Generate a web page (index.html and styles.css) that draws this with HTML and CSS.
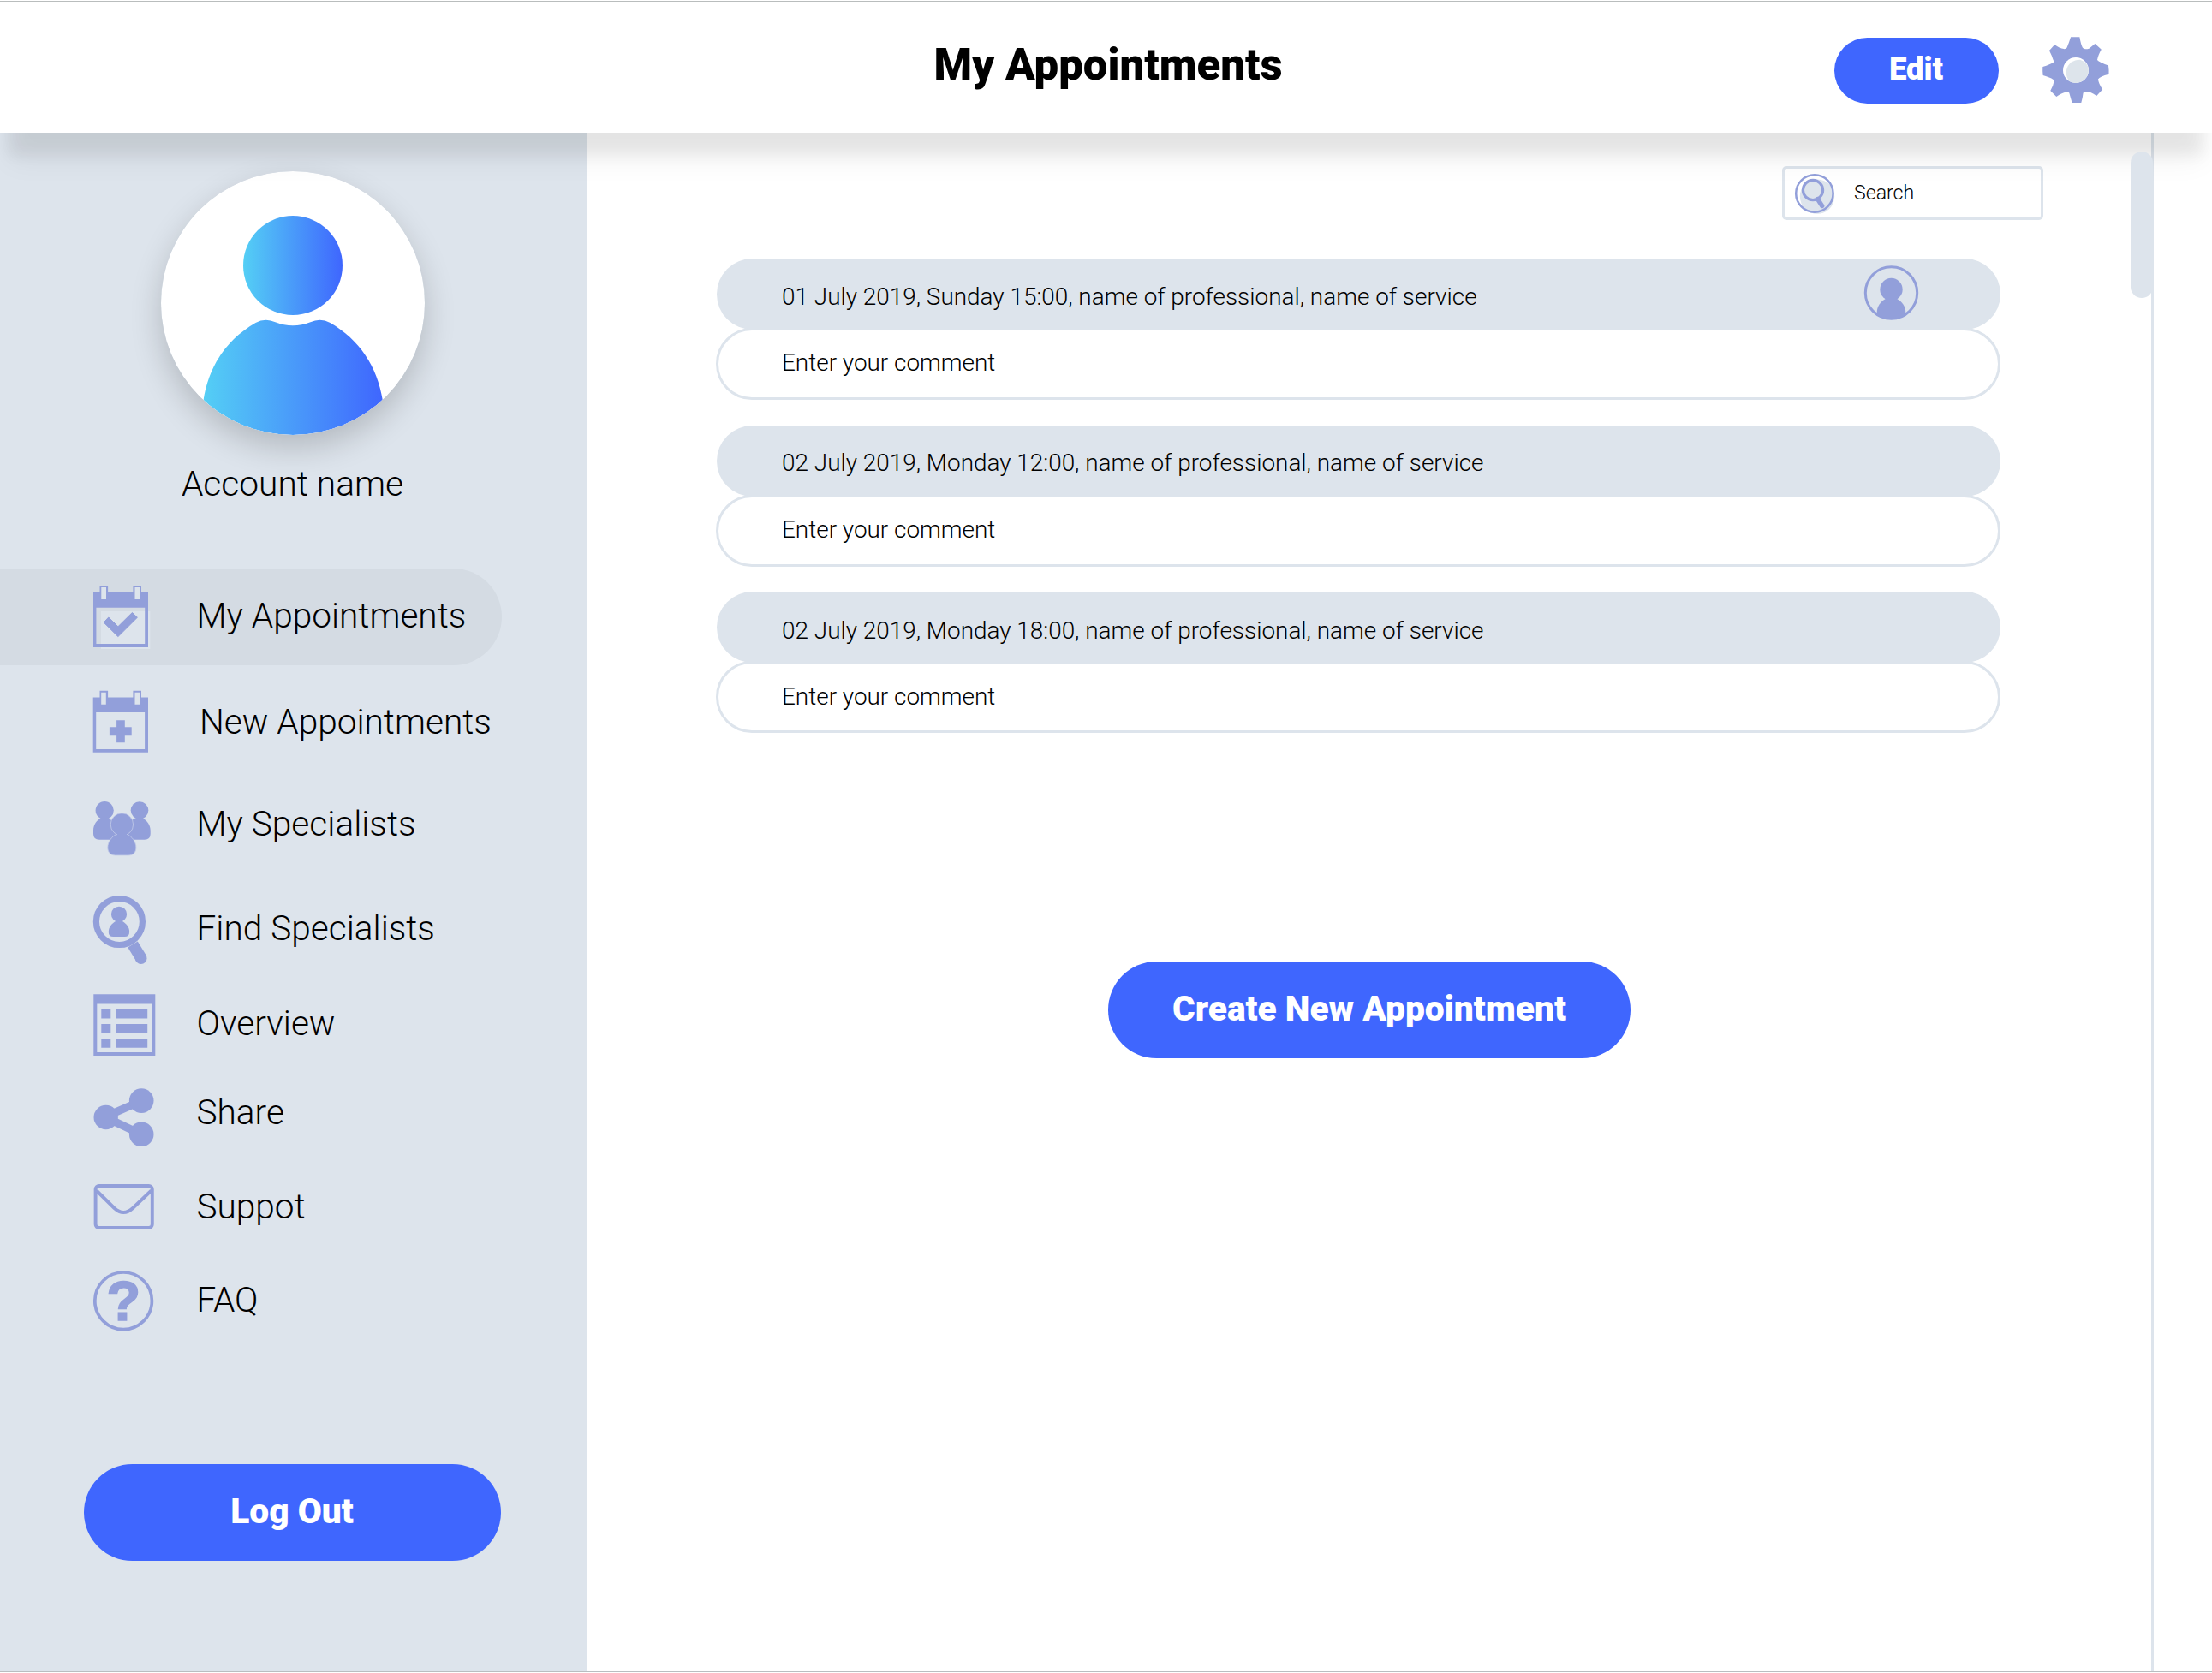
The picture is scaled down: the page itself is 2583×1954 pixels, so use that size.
FILE: index.html
```html
<!DOCTYPE html>
<html lang="en">
<head>
<meta charset="utf-8">
<title>My Appointments</title>
<link rel="stylesheet" href="styles.css">
</head>
<body>
<div class="app">
  <header class="topbar">
    <h1 class="topbar-title">My Appointments</h1>
    <div class="topbar-actions">
      <button class="btn btn-edit">Edit</button>
      <svg class="gear" viewBox="2384 42 80 80">
        <path fill="#929fda" d="M2418 43.3h10.4q1.5 9 3.6 12.4 2 2.5 7.4 1l7-5.7 7.4 6.7q-4 7-4.8 12.4 2.5 3 13 6.3.8 5 .5 10.3-10.500 2.500-12.500 5.700.5 5 5.200 12.000l-7 7.600q-8-5.500-11.600-5-3.200.3-4 1.400-.5 5-2.300 11.700h-10.700q-2-7-3.300-11.700-2-2-4.700-.6-4 1-10.300 5.300l-7-7q3.500-6 4.300-11.700-.2-1.500-1.300-1.700-3-2-11.700-4.600-.6-5-.3-10 9-3 12.600-5.400.8-1.500-.3-2.600-1.500-5-4.600-11l6.300-7q5.500 4.500 10.700 5 2.500.3 3.600-1.700 2-4.500 4.400-12z"/>
        <circle cx="2424" cy="82" r="15" fill="#fff"/>
        <path fill="#dde4eb" d="M2438.900 82a15 15 0 0 1-22 13.200c-8-8-4.500-25.500 12-25.500q10 3 10 12.300z"/>
      </svg>
    </div>
  </header>

  <div class="body">
    <aside class="sidebar">
      <svg class="avatar" viewBox="187.500 199.300 308 308">
        <defs>
          <linearGradient id="tone"><stop offset="0" stop-color="#54cff5"/><stop offset="1" stop-color="#3f66fe"/></linearGradient>
          <clipPath id="disc"><circle cx="341.500" cy="353.300" r="154"/></clipPath>
        </defs>
        <circle cx="341.500" cy="353.300" r="154" fill="#fff"/>
        <circle cx="341.500" cy="309.300" r="58" fill="url(#tone)"/>
        <path clip-path="url(#disc)" fill="url(#tone)" d="M237 467C243 427 264 396 298 376.400Q309 370 321 375.500Q341.500 383.700 362 375.500Q374 370 385 376.400C419 396 440 427 446.400 467V510H237Z"/>
      </svg>
      <p class="account">Account name</p>

      <nav class="menu">
        <a class="item item-mine">
          <svg class="icon" viewBox="105 664 80 113" height="113">
            <path fill="#dde4ec" d="M118 714h57.400v44H118z"/>
            <path fill="#929fda" fill-rule="evenodd" d="M109 692h64v64h-64zM112.400 709.700v42.300h56.800v-42.300z"/>
            <path fill="#929fda" d="M116.500 684h9.600v16.300h-9.600zM155.400 684h9.600v16.300h-9.600z"/>
            <path fill="#dde4ec" d="M118.300 686h5.700v14h-5.700zM157.500 686h5.700v14h-5.700z"/>
            <path fill="#929fda" stroke="#929fda" stroke-linejoin="round" d="M121.200 727l5.600-6 11.100 10.800 16.500-16.300 6 5.700-22.500 22.400z"/>
          </svg>
          <span class="label">My Appointments</span>
        </a>
        <a class="item item-new">
          <svg class="icon" viewBox="105 777 80 131" height="131">
            <path fill="#929fda" fill-rule="evenodd" d="M108.700 814.500h64.300v64.300h-64.300zM112.200 832v43h56.900v-43z"/>
            <path fill="#929fda" d="M116.500 806.700h9.600v16.300h-9.600zM155.400 806.700h9.600v16.300h-9.600z"/>
            <path fill="#dde4ec" d="M118.200 808.700h5.600v14h-5.600zM157.500 808.700h5.600v14h-5.600z"/>
            <path fill="#929fda" d="M136.100 841.300h9.700v7.900h7.900v10h-7.900v8h-9.700v-8h-8.200v-10h8.200z"/>
          </svg>
          <span class="label">New Appointments</span>
        </a>
        <a class="item item-specialists">
          <svg class="icon" viewBox="105 908 80 108" height="108">
            <g fill="#929fda">
              <circle cx="122.200" cy="946.500" r="10.600"/>
              <circle cx="163" cy="946.500" r="10.300"/>
              <path d="M109 970c0-7 4-12 9-14.500h8.500c5 2.500 9 8 9 14.500v4q0 6.700-7 6.700H116q-7 0-7-6.700zM149 970c0-7 4-12 9-14.500h8.500c5 2.500 9.200 8 9.200 14.500v4q0 6.700-7 6.700H156q-7 0-7-6.700z"/>
            </g>
            <g fill="#929fda" stroke="#c3cbe8" stroke-width=".8">
              <path d="M125.800 990c0-7 5-13 10-15.500h13c5 2.500 10.100 8.500 10.100 15.500 0 6-4 9-9 9h-15.100c-5 0-9-3-9-9z"/>
              <circle cx="142.400" cy="963" r="13.200"/>
            </g>
            <path fill="#929fda" d="M137 971h11v7h-11z"/>
          </svg>
          <span class="label">My Specialists</span>
        </a>
        <a class="item item-find">
          <svg class="icon" viewBox="105 1016 80 136" height="136">
            <circle cx="139.400" cy="1076.500" r="27" fill="none" stroke="#929fda" stroke-width="7.200"/>
            <path d="M155 1103l9.800 16" stroke="#929fda" stroke-width="13.500" fill="none"/>
            <circle cx="164.700" cy="1119.200" r="6.800" fill="#929fda"/>
            <g fill="#929fda">
              <circle cx="139" cy="1067.800" r="9.100"/>
              <path d="M126.800 1088.500c0-6 4-10 8.200-12.500h8c4.200 2.500 8.100 6.500 8.100 12.500q0 5.500-5.500 5.500h-13.300q-5.500 0-5.500-5.500z"/>
            </g>
          </svg>
          <span class="label">Find Specialists</span>
        </a>
        <a class="item item-overview">
          <svg class="icon" viewBox="105 1152 80 86" height="86">
            <path fill="#929fda" fill-rule="evenodd" d="M109.300 1161.200h72v71.700h-72zM113.300 1172.500v56.500h64v-56.500z"/>
            <path fill="#929fda" d="M118.300 1178.800h11v10.700h-11zM118.300 1196h11v10.800h-11zM118.300 1212.900h11v10.800h-11zM135.200 1178.800h37v10.700h-37zM135.200 1196h37v10.800h-37zM135.200 1212.900h37v10.800h-37z"/>
          </svg>
          <span class="label">Overview</span>
        </a>
        <a class="item item-share">
          <svg class="icon" viewBox="105 1238 80 122" height="122">
            <path d="M165.300 1285.700l-41.600 18.300M165.300 1325l-41.600-19.700" stroke="#929fda" stroke-width="9.300" fill="none"/>
            <g fill="#929fda"><circle cx="123.700" cy="1305" r="14.200"/><circle cx="165.200" cy="1285.600" r="14.300"/><circle cx="165.200" cy="1324.800" r="14.300"/></g>
          </svg>
          <span class="label">Share</span>
        </a>
        <a class="item item-support">
          <svg class="icon" viewBox="105 1360 80 97" height="97">
            <g fill="none" stroke="#929fda" stroke-width="3.900">
              <rect x="111.600" y="1385" width="66.200" height="49" rx="4"/>
              <path d="M112.700 1390.500l20.800 20.500q5.500 5 10.800 5t10.800-5l21.600-20.500"/>
            </g>
          </svg>
          <span class="label">Suppot</span>
        </a>
        <a class="item item-faq">
          <svg class="icon" viewBox="105 1457 80 122" height="122">
            <circle cx="144.100" cy="1519.300" r="33.300" fill="none" stroke="#929fda" stroke-width="3.700"/>
            <text class="icon-mark" x="144.300" y="1542.300" text-anchor="middle">?</text>
          </svg>
          <span class="label">FAQ</span>
        </a>
      </nav>

      <button class="btn btn-logout">Log Out</button>
    </aside>

    <main class="content">
      <div class="search">
        <svg class="search-icon" viewBox="2095 200 48 50">
          <circle cx="2122" cy="228.600" r="20.200" fill="#dde4ec"/>
          <circle cx="2118.900" cy="225" r="21.700" fill="none" stroke="#929fda" stroke-width="2.500"/>
          <circle cx="2117" cy="221" r="11.600" fill="#dde4ec" stroke="#929fda" stroke-width="3.200"/>
          <path d="M2122.500 231.500l5.200 8" stroke="#929fda" stroke-width="5.300" stroke-linecap="round"/>
        </svg>
        <span class="search-text">Search</span>
      </div>

      <section class="list">
        <article class="entry">
          <div class="entry-head">
            <span class="entry-text">01 July 2019, Sunday 15:00, name of professional, name of service</span>
            <svg class="person" viewBox="2176 309 66 66">
              <defs><clipPath id="ring"><circle cx="2208.500" cy="342" r="31"/></clipPath></defs>
              <circle cx="2208.500" cy="342" r="30.200" fill="none" stroke="#929fda" stroke-width="3"/>
              <circle cx="2208.500" cy="338" r="13.200" fill="#929fda"/>
              <path clip-path="url(#ring)" fill="#929fda" d="M2191.700 376v-11c0-7 4-13 11-16.500h11.600c7 3.500 11 9.500 11 16.500v11z"/>
            </svg>
          </div>
          <div class="entry-note">Enter your comment</div>
        </article>
        <article class="entry">
          <div class="entry-head"><span class="entry-text">02 July 2019, Monday 12:00, name of professional, name of service</span></div>
          <div class="entry-note">Enter your comment</div>
        </article>
        <article class="entry entry-last">
          <div class="entry-head"><span class="entry-text">02 July 2019, Monday 18:00, name of professional, name of service</span></div>
          <div class="entry-note">Enter your comment</div>
        </article>
      </section>

      <button class="btn btn-create">Create New Appointment</button>
    </main>

    <div class="rail"><div class="thumb"></div></div>
  </div>
</div>
</body>
</html>
```
FILE: styles.css
```css
* { box-sizing: border-box; }

body {
  margin: 0;
  background: #fff;
  color: #000;
  font-family: Roboto, "Liberation Sans", sans-serif;
  font-weight: 300;
}

.app {
  display: flex;
  flex-direction: column;
  width: 2583px;
  height: 1953px;
  overflow: hidden;
  border-bottom: 1px solid #b9bdc0;
}

/* Top bar */
.topbar {
  position: relative;
  display: grid;
  grid-template-columns: 1fr auto 1fr;
  height: 155px;
  flex: none;
  background: linear-gradient(#b9bdbd, #b9bdbd) 0 1px / 100% 1px no-repeat #fff;
  box-shadow: 0 36px 16px -10px rgba(0, 0, 0, .06), 0 44px 30px -10px rgba(0, 0, 0, .05);
}

.topbar-title {
  grid-column: 2;
  margin: 0;
  padding: 0 0 3px 5px;
  align-self: center;
  font-size: 50.9px;
  line-height: 60px;
  font-weight: 900;
}

.topbar-actions {
  display: flex;
  justify-content: flex-end;
  align-items: center;
  gap: 50px;
  padding: 9px 119px 0 0;
}

.gear { width: 80px; height: 80px; }

.btn {
  display: block;
  margin: 0;
  border: 0;
  background: #3f66fe;
  color: #fff;
  font-family: inherit;
  font-weight: 900;
  font-size: 40.7px;
  text-align: center;
}

.btn-edit {
  width: 192px;
  height: 77px;
  padding: 0 1px 4px 0;
  border-radius: 39px;
  font-size: 36.5px;
}

.body {
  display: flex;
  flex: 1;
  min-height: 0;
}

/* Sidebar */
.sidebar {
  display: flex;
  flex-direction: column;
  width: 684.5px;
  padding-top: 44.5px;
  background: #dde4ec;
}

.avatar {
  width: 308px;
  height: 308px;
  margin-left: 187.5px;
  border-radius: 50%;
  box-shadow: 0 15px 36px rgba(0, 0, 0, .19);
}

.account {
  width: 683px;
  height: 60px;
  margin: 27.500px 0 69px;
  line-height: 60px;
  font-size: 40.7px;
  text-align: center;
}

.menu { display: flex; flex-direction: column; }

.item {
  display: flex;
  align-items: center;
  gap: 44.500px;
  padding-left: 105px;
  font-size: 40.6px;
}

.icon { flex: none; width: 80px; }

.icon-mark {
  fill: #929fda;
  stroke: #929fda;
  stroke-width: 1.6px;
  font-family: "Liberation Sans", sans-serif;
  font-size: 65px;
  font-weight: 700;
}

.item-mine {
  width: 586px;
  height: 113px;
  border-radius: 0 56.5px 56.5px 0;
  background: #d4dbe3;
}

.item-mine .label { padding-bottom: 3px; }
.item-new { height: 131px; gap: 48px; }
.item-specialists { height: 108px; }
.item-find { height: 136px; }
.item-specialists .label, .item-find .label { padding-bottom: 1px; }
.item-overview { height: 86px; }
.item-share { height: 122px; }
.item-support { height: 97px; }
.item-faq { height: 122px; }

.btn-logout {
  width: 487px;
  height: 113px;
  margin: 131px 0 0 98px;
  padding: 0 1px 3px 0;
  border-radius: 57px;
}

/* Main area */
.content {
  display: flex;
  flex-direction: column;
  width: 1827.5px;
  padding: 39px 126px 0 151.5px;
}

.search {
  display: flex;
  align-items: center;
  align-self: flex-end;
  gap: 22px;
  width: 305px;
  height: 63px;
  padding-left: 11px;
  border: 3px solid #dde4ec;
  border-radius: 5px;
  font-size: 23.1px;
}

.search-icon { width: 48px; height: 50px; }

.list {
  display: flex;
  flex-direction: column;
  gap: 29.500px;
  width: 1500px;
  margin-top: 45px;
}

.entry-head {
  display: flex;
  align-items: center;
  justify-content: space-between;
  height: 83px;
  padding: 0 94px 0 76px;
  margin-left: 1px;
  border-radius: 42px;
  background: #dde4ec;
  font-size: 27.920px;
}

.entry-text { padding-top: 5px; }

.person { width: 66px; height: 66px; margin-bottom: 3px; }

.entry-note {
  height: 84px;
  margin-top: -2px;
  padding: 0 78px 0 74px;
  border: 3px solid #dde4ec;
  border-radius: 42px;
  background: #fff;
  font-size: 27.920px;
  line-height: 75px;
}

.entry-last .entry-text { padding-top: 7px; }
.entry-last .entry-note { line-height: 78px; }

.btn-create {
  width: 610px;
  height: 113px;
  margin: 267px 0 0 458px;
  padding: 0 0 3px;
  border-radius: 57px;
}

/* Scroll rail */
.rail {
  width: 71px;
  border-left: 3px solid #dde4ec;
}

.thumb {
  position: relative;
  left: -27px;
  width: 26px;
  height: 171px;
  margin-top: 22px;
  border-radius: 13px;
  background: #dde4ec;
}
```
